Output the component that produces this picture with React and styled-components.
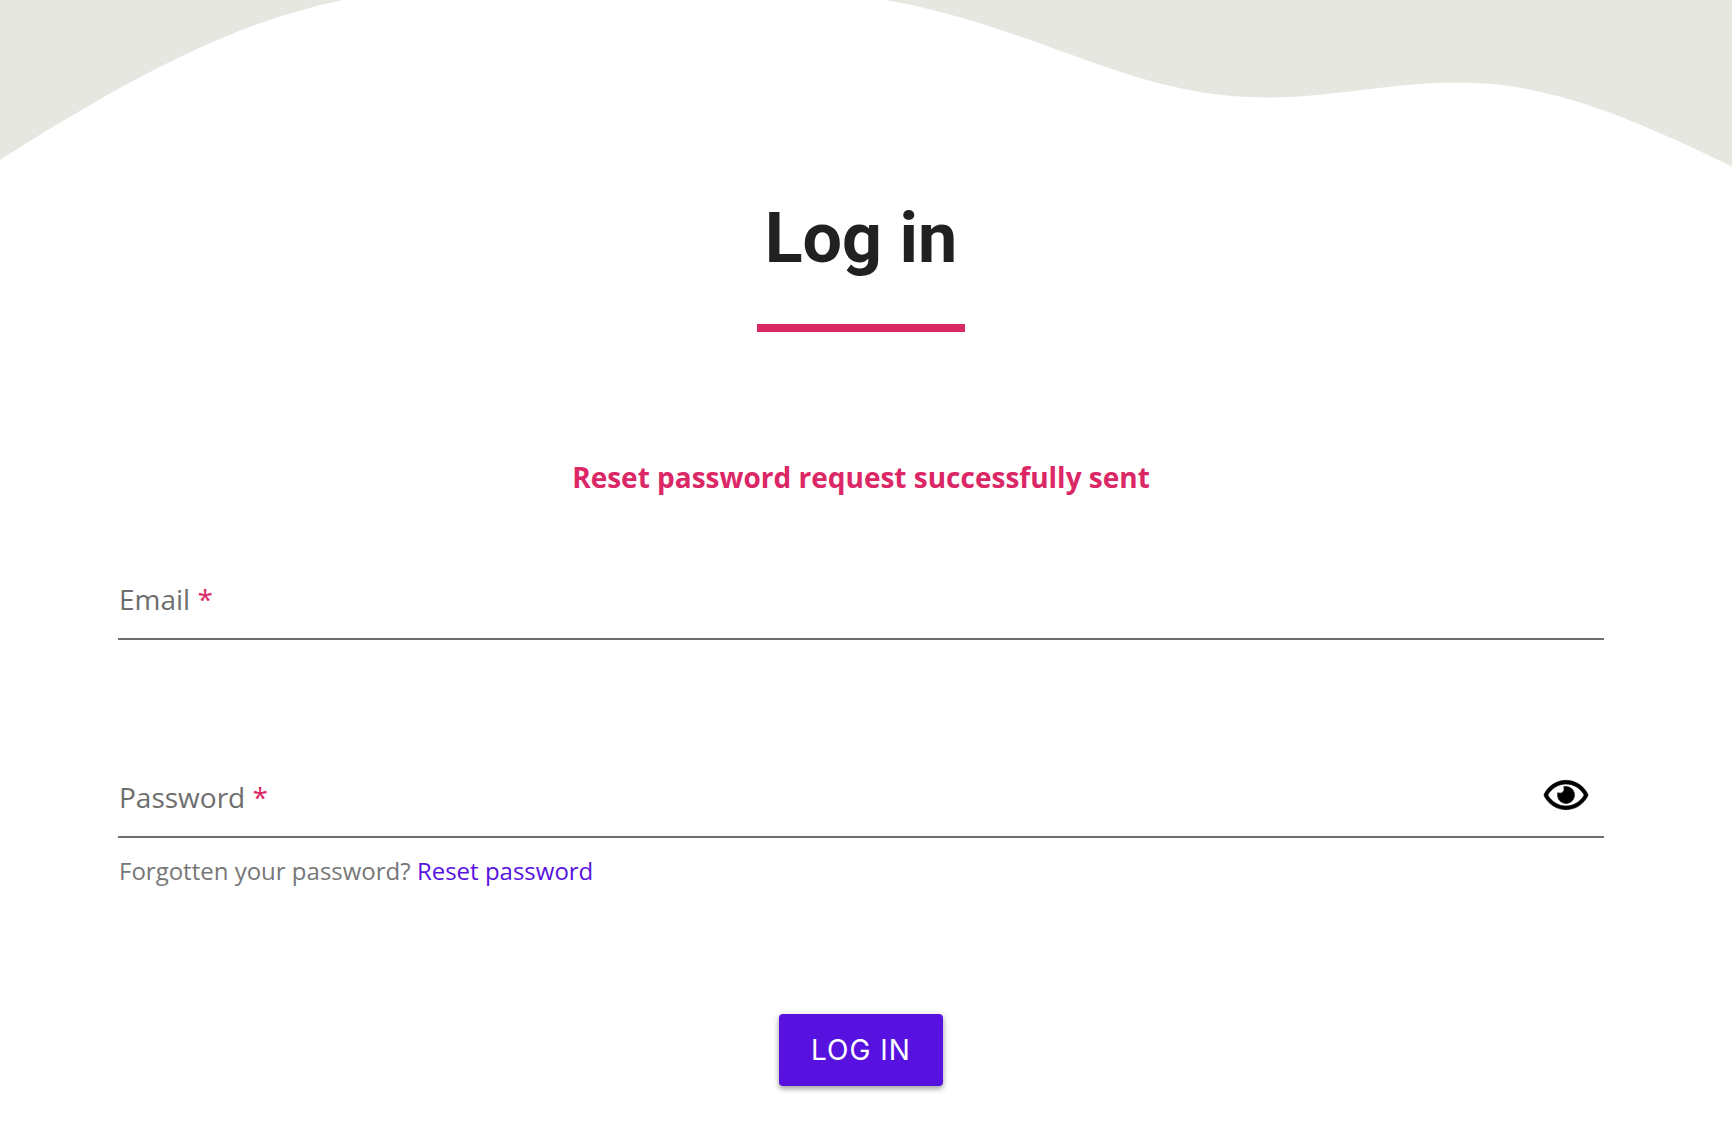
import React, { useState } from "react";
import styled, { createGlobalStyle } from "styled-components";
import { FaRegEye } from "react-icons/fa";

const GlobalStyle = createGlobalStyle`
  *, *::before, *::after { box-sizing: border-box; }
  body {
    margin: 0;
    background: #fff;
    color: #6e6e6e;
    font-family: "Open Sans", "Noto Sans", sans-serif;
  }
`;

const Wave = styled.svg`
  display: block;
  width: 100%;
  height: 168px;
  fill: #e5e7e0;
`;

const Page = styled.main`
  display: flex;
  flex-direction: column;
  align-items: center;
  padding: 28px 128px 48px 118px;
`;

const Title = styled.h1`
  margin: 0;
  color: #212121;
  font: 700 70px/84px Roboto, sans-serif;
`;

const Rule = styled.hr`
  width: 208px;
  height: 8px;
  margin: 44px 0 0;
  border: 0;
  background: #db2766;
`;

const Message = styled.p`
  margin: 126px 0 0;
  color: #db2766;
  font-size: 28px;
  font-weight: 700;
  line-height: 38px;
`;

const Form = styled.form`
  display: flex;
  flex-direction: column;
  width: 100%;
  margin-top: 84px;
`;

const Field = styled.div`
  display: flex;
  align-items: flex-start;
  gap: 16px;
  height: 60px;
  padding: 0 16px 0 1px;
  border-bottom: 2px solid #6e6e6e;
  font-size: 28px;
  line-height: 38px;

  & + & {
    margin-top: 138px;
  }
`;

const Label = styled.label`
  white-space: nowrap;
`;

const Required = styled.span`
  color: #db2766;
`;

const Input = styled.input`
  flex: 1;
  min-width: 0;
  height: 38px;
  padding: 0;
  border: 0;
  outline: 0;
  background: transparent;
  color: #212121;
  font: inherit;
`;

const IconButton = styled.button`
  display: flex;
  align-items: center;
  height: 34px;
  padding: 0;
  border: 0;
  background: transparent;
  color: #000;
  cursor: pointer;

  svg {
    width: 44px;
    height: 40px;
    overflow: visible;
    stroke-width: 8px;
  }
`;

const Hint = styled.p`
  margin: 17px 0 0 1px;
  color: #777;
  font-size: 24px;
  line-height: 32px;
`;

const Link = styled.a`
  color: #5812e0;
  text-decoration: none;
`;

const Submit = styled.button`
  align-self: center;
  height: 72px;
  margin-top: 127px;
  padding: 0 32px;
  border: 0;
  border-radius: 4px;
  background: #5812e0;
  box-shadow: 0 3px 5px rgba(0, 0, 0, 0.3), 0 1px 10px rgba(0, 0, 0, 0.12);
  color: #fff;
  font: 400 28px/32px Inter, sans-serif;
  letter-spacing: 1px;
  text-transform: uppercase;
  cursor: pointer;
`;

export default function App() {
  const [visible, setVisible] = useState(false);

  return (
    <>
      <GlobalStyle />
      <Wave viewBox="0 0 1732 168" preserveAspectRatio="none" aria-hidden="true">
        <path d="M0 0V160C115 87 228 23 343 0Z" />
        <path d="M886 0C1045 29 1130 97.5 1266 97.5C1332 97.5 1392 82.5 1458 82.5C1545 82.5 1622 113 1732 166.5V0Z" />
      </Wave>
      <Page>
        <Title>Log in</Title>
        <Rule />
        <Message role="status">Reset password request successfully sent</Message>
        <Form onSubmit={(event) => event.preventDefault()}>
          <Field>
            <Label htmlFor="email">
              Email <Required>*</Required>
            </Label>
            <Input id="email" type="email" required />
          </Field>
          <Field>
            <Label htmlFor="password">
              Password <Required>*</Required>
            </Label>
            <Input id="password" type={visible ? "text" : "password"} required />
            <IconButton
              type="button"
              aria-label="Show password"
              aria-pressed={visible}
              onClick={() => setVisible(!visible)}
            >
              <FaRegEye />
            </IconButton>
          </Field>
          <Hint>
            Forgotten your password? <Link href="#reset">Reset password</Link>
          </Hint>
          <Submit type="submit">Log in</Submit>
        </Form>
      </Page>
    </>
  );
}
